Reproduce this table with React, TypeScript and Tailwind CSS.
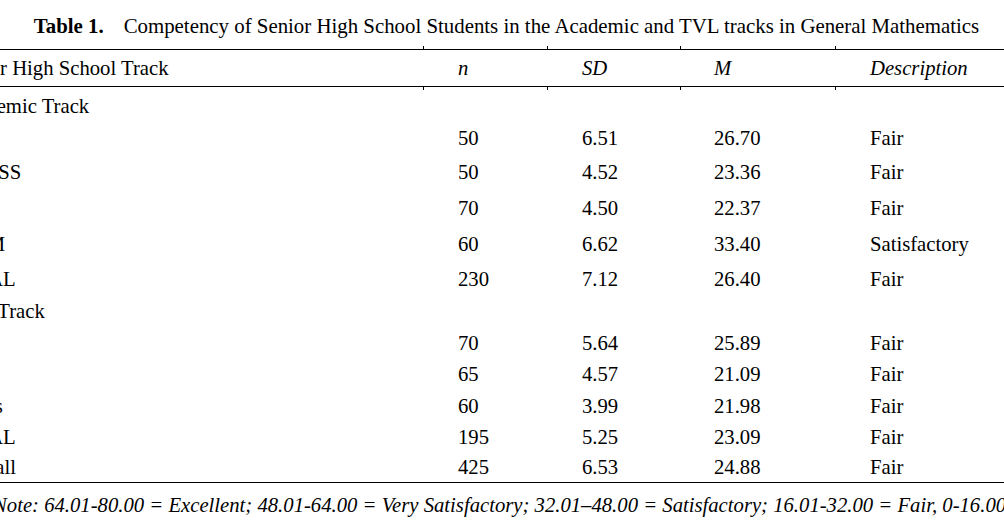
const rows = [
  { label: 'Academic Track', h: 'h-[31px]', shift: '' },
  { label: 'GAS', n: '50', sd: '6.51', m: '26.70', d: 'Fair', h: 'h-[33px]', shift: '-ml-[3px]' },
  { label: 'HUMSS', n: '50', sd: '4.52', m: '23.36', d: 'Fair', h: 'h-[36px]', shift: '-ml-[3px]' },
  { label: 'ABM', n: '70', sd: '4.50', m: '22.37', d: 'Fair', h: 'h-[36px]', shift: '-ml-[3px]' },
  { label: 'STEM', n: '60', sd: '6.62', m: '33.40', d: 'Satisfactory', h: 'h-[36px]', shift: '-ml-[3px]' },
  { label: 'TOTAL', n: '230', sd: '7.12', m: '26.40', d: 'Fair', h: 'h-[33px]', shift: '-ml-[3px]' },
  { label: 'TVL Track', h: 'h-[32px]', shift: '' },
  { label: 'ICT', n: '70', sd: '5.64', m: '25.89', d: 'Fair', h: 'h-[31px]', shift: '-ml-[3px]' },
  { label: 'HE', n: '65', sd: '4.57', m: '21.09', d: 'Fair', h: 'h-[32px]', shift: '-ml-[3px]' },
  { label: 'Sports', n: '60', sd: '3.99', m: '21.98', d: 'Fair', h: 'h-[31px]', shift: '-ml-[3px]' },
  { label: 'TOTAL', n: '195', sd: '5.25', m: '23.09', d: 'Fair', h: 'h-[31px]', shift: '-ml-[3px]' },
  { label: 'Overall', n: '425', sd: '6.53', m: '24.88', d: 'Fair', h: 'h-[30px]', shift: 'ml-[1px]' },
]

// short column marks that poke out of the rules
function Ticks() {
  return (
    <div className="flex h-[3px]">
      <div className="w-[470px] shrink-0" />
      <div className="w-[124px] shrink-0 border-l border-solid border-[#000]" />
      <div className="w-[133px] shrink-0 border-l border-solid border-[#000]" />
      <div className="w-[155px] shrink-0 border-l border-solid border-[#000]" />
      <div className="flex-1 border-l border-solid border-[#000]" />
    </div>
  )
}

function Rule() {
  return <div className="h-[1px] w-[1120px] bg-[#000]" />
}

export default function App() {
  return (
    <div className="w-[1004px] h-[527px] overflow-hidden bg-white text-black font-[family-name:Liberation_Serif,serif] text-[20.7px] leading-[24px]">
      <div className="h-[46px] pt-[5px] pl-[9px] flex items-center justify-center whitespace-nowrap text-[20.85px]">
        <span className="font-bold">Table 1.</span>
        <span className="ml-[20px]">Competency of Senior High School Students in the Academic and TVL tracks in General Mathematics</span>
      </div>

      <div className="-ml-[47px] w-[1120px]">
        <Ticks />
        <Rule />
        <div className="flex h-[36px] items-center whitespace-nowrap">
          <div className="w-[470px] shrink-0">Senior High School Track</div>
          <div className="w-[124px] shrink-0 pl-[35px] italic">n</div>
          <div className="w-[133px] shrink-0 pl-[35px] italic">SD</div>
          <div className="w-[155px] shrink-0 pl-[34px] italic">M</div>
          <div className="flex-1 pl-[35px] italic">Description</div>
        </div>
        <Rule />
        <Ticks />
        {rows.map((r, i) => (
          <div key={i} className={`flex items-center whitespace-nowrap ${r.h}`}>
            <div className="w-[470px] shrink-0">
              <span className={r.shift}>{r.label}</span>
            </div>
            <div className="w-[124px] shrink-0 pl-[35px]">{r.n}</div>
            <div className="w-[133px] shrink-0 pl-[35px]">{r.sd}</div>
            <div className="w-[155px] shrink-0 pl-[34px]">{r.m}</div>
            <div className="flex-1 pl-[35px]">{r.d}</div>
          </div>
        ))}
        <Rule />
      </div>

      <div className="h-[44px] -ml-[7px] flex items-center italic whitespace-nowrap">
        Note: 64.01-80.00 = Excellent; 48.01-64.00 = Very Satisfactory; 32.01–48.00 = Satisfactory; 16.01-32.00 = Fair, 0-16.00 = Poor
      </div>
    </div>
  )
}
